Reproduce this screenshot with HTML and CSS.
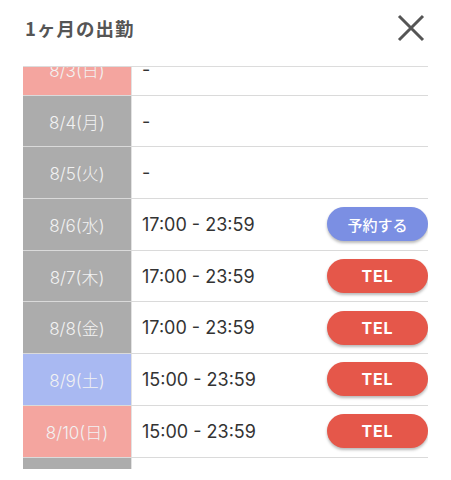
FILE: index.html
```html
<!DOCTYPE html>
<html lang="ja">
<head>
<meta charset="utf-8">
<link rel="stylesheet" href="styles.css">
</head>
<body>
<div class="modal">
  <div class="header">
    <h1 class="title">1ヶ月の出勤</h1>
    <svg class="close" width="30" height="30" viewBox="0 0 30 30" aria-label="閉じる">
      <path d="M3 3 L27 27 M27 3 L3 27" stroke="#555" stroke-width="3" fill="none" stroke-linecap="butt"/>
    </svg>
  </div>
  <div class="scroller">
    <div class="list">
      <div class="row"><div class="date sun">8/3(日)</div><div class="time">-</div></div>
      <div class="row"><div class="date">8/4(月)</div><div class="time">-</div></div>
      <div class="row"><div class="date">8/5(火)</div><div class="time">-</div></div>
      <div class="row"><div class="date">8/6(水)</div><div class="time">17:00 - 23:59</div><button class="btn btn-reserve">予約する</button></div>
      <div class="row"><div class="date">8/7(木)</div><div class="time">17:00 - 23:59</div><button class="btn btn-tel">TEL</button></div>
      <div class="row"><div class="date">8/8(金)</div><div class="time">17:00 - 23:59</div><button class="btn btn-tel">TEL</button></div>
      <div class="row"><div class="date sat">8/9(土)</div><div class="time">15:00 - 23:59</div><button class="btn btn-tel">TEL</button></div>
      <div class="row"><div class="date sun">8/10(日)</div><div class="time">15:00 - 23:59</div><button class="btn btn-tel">TEL</button></div>
      <div class="row"><div class="date"></div><div class="time"></div></div>
    </div>
  </div>
</div>
</body>
</html>
```
FILE: styles.css
```css
html, body {
  margin: 0;
  padding: 0;
  background: #fff;
}
body {
  font-family: Inter, "Noto Sans CJK JP", sans-serif;
  color: #333;
  width: 451px;
  height: 480px;
  overflow: hidden;
}
.modal {
  display: flex;
  flex-direction: column;
}
.header {
  height: 66px;
  display: flex;
  align-items: center;
  justify-content: space-between;
  padding: 0 25px 10px 25px;
  box-sizing: border-box;
}
.title {
  margin: 0;
  font-family: "Noto Sans CJK JP", sans-serif;
  font-size: 18.5px;
  font-weight: 700;
  color: #555;
  letter-spacing: 1px;
}
.close {
  display: block;
}
.scroller {
  margin-left: 23px;
  width: 405px;
  height: 403px;
  overflow: hidden;
  border-top: 1px solid #dcdcdc;
  box-sizing: border-box;
}
.list {
  margin-top: -23px;
}
.row {
  display: flex;
  align-items: center;
  height: 51.7px;
  box-sizing: border-box;
  border-bottom: 1.7px solid #dadada;
}
.date {
  width: 108px;
  flex: none;
  align-self: stretch;
  display: flex;
  align-items: center;
  justify-content: center;
  background: #acacac;
  color: #f2f2f2;
  font-size: 17px;
  font-weight: 300;
  border-right: 1.5px solid #e2e2e2;
}
.date.sun {
  background: #f4a59f;
}
.date.sat {
  background: #a9b9f2;
}
.time {
  flex: 1;
  padding-left: 10px;
  font-size: 18px;
  color: #333;
}
.btn {
  flex: none;
  width: 101px;
  height: 34px;
  border: none;
  border-radius: 17px;
  color: #fff;
  font-family: Inter, "Noto Sans CJK JP", sans-serif;
  box-shadow: 0 2px 3px rgba(0, 0, 0, 0.28);
  padding: 0;
}
.btn-reserve {
  background: #7b8fe3;
  font-size: 15px;
  font-weight: 500;
}
.btn-tel {
  background: #e5574a;
  font-size: 16px;
  font-weight: 700;
  letter-spacing: 0.8px;
}
```
